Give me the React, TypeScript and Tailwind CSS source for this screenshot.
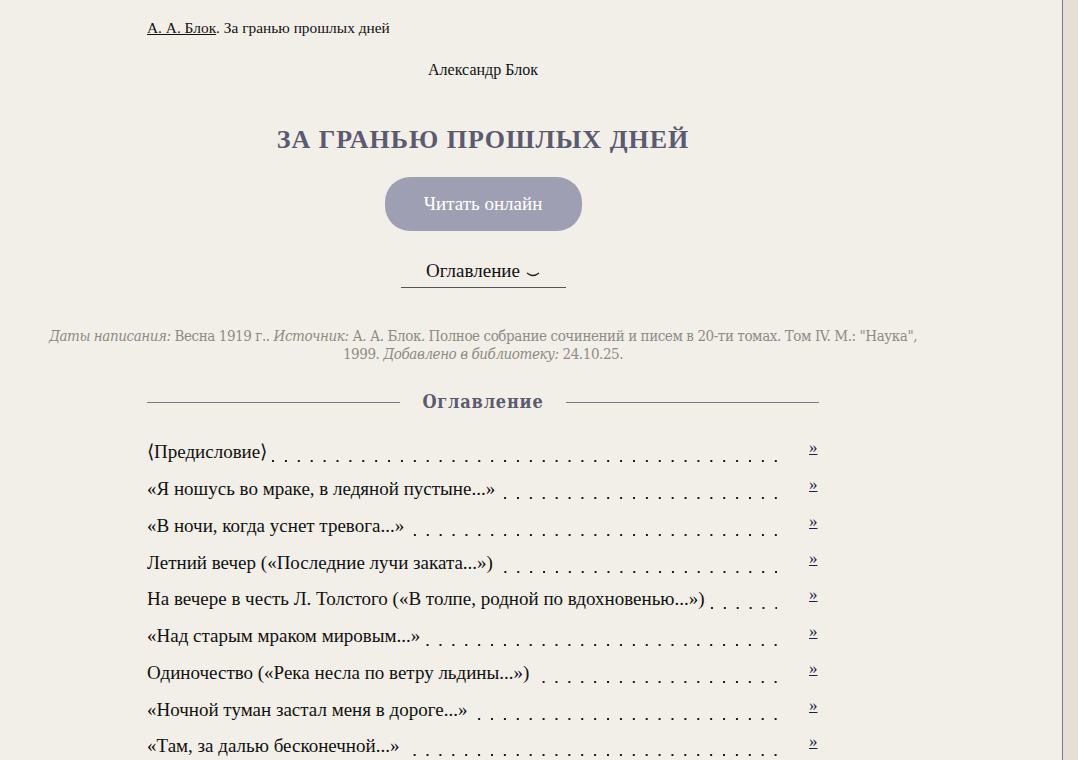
const toc = [
  '⟨Предисловие⟩',
  '«Я ношусь во мраке, в ледяной пустыне...»',
  '«В ночи, когда уснет тревога...»',
  'Летний вечер («Последние лучи заката...»)',
  'На вечере в честь Л. Толстого («В толпе, родной по вдохновенью...»)',
  '«Над старым мраком мировым...»',
  'Одиночество («Река несла по ветру льдины...»)',
  '«Ночной туман застал меня в дороге...»',
  '«Там, за далью бесконечной...»',
];

export default function App() {
  return (
    <div className="flex min-h-[760px] bg-[#e6dfd3] font-['Liberation_Serif',serif] text-[#111]">
      <div className="w-[1063px] shrink-0 border-r border-[#7b7891] bg-[#f2efe8] pb-10">
        <div className="w-[966px]">
          {/* Breadcrumb */}
          <div className="mx-[147px] pt-[18px] text-[15.4px] leading-[20px]">
            <a href="#" className="underline">А. А. Блок</a>. За гранью прошлых дней
          </div>

          <div className="mt-[21px] text-center text-[16px] leading-[22px]">Александр Блок</div>

          <h1 className="mt-[43px] text-center text-[26px] font-bold uppercase leading-[32px] tracking-[1px] text-[#5b5a70]">
            За гранью прошлых дней
          </h1>

          <div className="mt-[21px] flex justify-center">
            <button className="h-[54px] w-[197px] rounded-[25px] bg-[#9f9fb4] text-[19px] text-white">
              Читать онлайн
            </button>
          </div>

          <div className="mt-[28px] flex justify-center">
            <div className="flex w-[165px] items-center justify-center gap-[6px] border-b border-[#555] pb-[4px] text-[19px] leading-[24px]">
              Оглавление
              <svg width="14" height="8" viewBox="0 0 14 8" className="mt-[8px]">
                <path d="M1 2 Q7 7 13 2" fill="none" stroke="#222" strokeWidth="1.3" />
              </svg>
            </div>
          </div>

          {/* Meta */}
          <p className="mx-auto mt-[39px] w-[900px] text-center font-['DejaVu_Serif_Condensed','DejaVu_Serif',serif] text-[15px] leading-[18px] tracking-[-0.42px] text-[#8d8b87] [font-stretch:condensed]">
            <i>Даты написания:</i> Весна 1919 г.. <i>Источник:</i> А. А. Блок. Полное собрание сочинений и писем в 20-ти томах. Том IV. М.: "Наука",
            <br />
            1999. <i>Добавлено в библиотеку:</i> 24.10.25.
          </p>

          {/* TOC */}
          <div className="mx-[147px] mt-[27px]">
            <div className="flex items-center gap-[22px]">
              <div className="h-px flex-1 bg-[#7a7a80]" />
              <div className="font-['DejaVu_Serif_Condensed','DejaVu_Serif',serif] text-[18px] font-bold leading-[24px] tracking-[0.8px] text-[#5b5a70]">
                Оглавление
              </div>
              <div className="h-px flex-1 bg-[#7a7a80]" />
            </div>

            <ul className="mt-[20px]">
              {toc.map((t) => (
                <li key={t} className="flex h-[36.75px] items-center text-[19px] leading-[24px]">
                  <span className="whitespace-nowrap">{t}</span>
                  <span className="ml-[4px] mr-[32px] mt-[18px] h-[2px] flex-1 bg-[linear-gradient(to_left,#1a1a1a_2px,transparent_2px)] bg-[length:12.9px_2px] bg-right bg-repeat-x" />
                  <a href="#" className="mb-[8px] w-[10px] text-[17px] leading-[16px] text-[#1b1f4a] underline">»</a>
                </li>
              ))}
            </ul>
          </div>
        </div>
      </div>
    </div>
  );
}
